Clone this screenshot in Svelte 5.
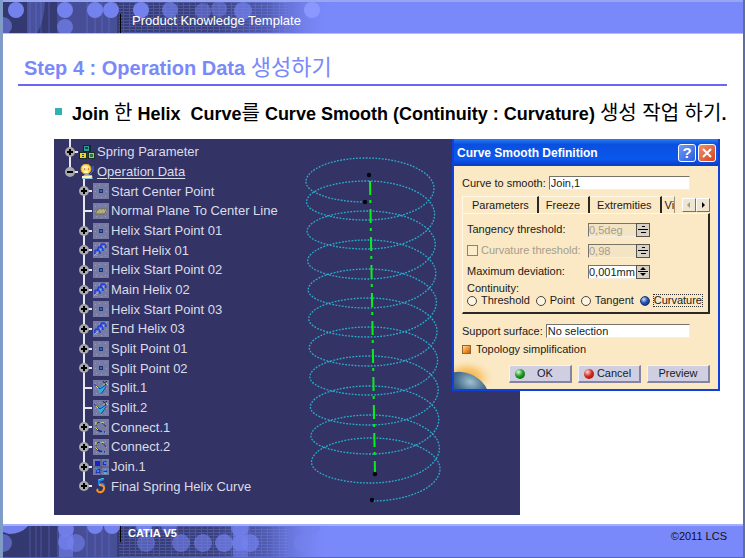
<script lang="ts">
  type Node = { label: string; icon: string; expandable: boolean };

  const roots: Node[] = [
    { label: 'Spring Parameter', icon: 'blocks', expandable: true },
    { label: 'Operation Data', icon: 'body', expandable: true }
  ];

  const children: Node[] = [
    { label: 'Start Center Point', icon: 'point', expandable: true },
    { label: 'Normal Plane To Center Line', icon: 'plane', expandable: false },
    { label: 'Helix Start Point 01', icon: 'point', expandable: true },
    { label: 'Start Helix 01', icon: 'helix', expandable: true },
    { label: 'Helix Start Point 02', icon: 'point', expandable: true },
    { label: 'Main Helix 02', icon: 'helix', expandable: true },
    { label: 'Helix Start Point 03', icon: 'point', expandable: true },
    { label: 'End Helix 03', icon: 'helix', expandable: true },
    { label: 'Split Point 01', icon: 'point', expandable: true },
    { label: 'Split Point 02', icon: 'point', expandable: true },
    { label: 'Split.1', icon: 'split', expandable: false },
    { label: 'Split.2', icon: 'split', expandable: false },
    { label: 'Connect.1', icon: 'connect', expandable: true },
    { label: 'Connect.2', icon: 'connect', expandable: true },
    { label: 'Join.1', icon: 'join', expandable: true },
    { label: 'Final Spring Helix Curve', icon: 'spring', expandable: true }
  ];

  // y of the highest and lowest point of every turn, top to bottom
  const tops = [19, 42, 72, 101, 130, 159, 188, 217, 247, 276, 299];
  const bottoms = [63, 81, 110, 140, 169, 198, 227, 256, 286, 315, 344, 362];
  const K = 0.55;

  function helixPath(): string {
    let d = `M75 ${bottoms[0]}`;
    tops.forEach((top, i) => {
      const low = bottoms[i];
      const next = bottoms[i + 1];
      const left = 16 + i * 0.55;
      const right = 144 + i * 0.6;
      const mid = 76 + i * 0.5;
      const endX = i === tops.length - 1 ? 82 : mid;
      const startX = i === 0 ? 75 : mid;
      const ly = low - (low - top) * 0.46;
      const ry = top + (next - top) * 0.49;
      d += ` C${startX - (startX - left) * K} ${low} ${left} ${ly + (low - ly) * K} ${left} ${ly}`;
      d += ` C${left} ${ly - (ly - top) * K} ${mid - (mid - left) * K} ${top} ${mid} ${top}`;
      d += ` C${mid + (right - mid) * K} ${top} ${right} ${ry - (ry - top) * K} ${right} ${ry}`;
      d += ` C${right} ${ry + (next - ry) * K} ${endX + (right - endX) * K} ${next} ${endX} ${next}`;
    });
    return d;
  }

  const tabs = ['Parameters', 'Freeze', 'Extremities'];
  const modes = ['Threshold', 'Point', 'Tangent', 'Curvature'];

  let activeTab = $state('Parameters');
  let continuity = $state('Curvature');
  let curve = $state('Join,1');
  let support = $state('No selection');
  let tangency = $state('0,5deg');
  let curvature = $state('0,98');
  let deviation = $state('0,001mm');
  let useCurvature = $state(false);
  let simplify = $state(true);
</script>

{#snippet pattern(id: string, flip: boolean)}
  <svg class="pattern" viewBox="0 0 340 31" width="340" height="31" aria-hidden="true">
    <defs>
      <linearGradient id="{id}-fade">
        <stop offset="0" stop-color="#33386f" />
        <stop offset="0.62" stop-color="#3a407c" />
        <stop offset="0.78" stop-color="#4a54a4" stop-opacity="0.85" />
        <stop offset="0.97" stop-color="#7a89fa" stop-opacity="0" />
      </linearGradient>
      <pattern id="{id}-grid" width="6" height="3" patternUnits="userSpaceOnUse">
        <path d="M0 0.5H6M0.5 0V3" stroke="#7a89fa" stroke-width="1" opacity="0.3" />
      </pattern>
    </defs>
    <rect width="340" height="31" fill="url(#{id}-fade)" />
    <rect x="54" width="60" height="31" fill="#6673d8" opacity="0.35" />
    <rect x="116" width="170" height="31" fill="url(#{id}-grid)" />
    <path d="M27 0V31M33 0V31M38 0V31M46 0V31M84 0V31M92 0V31M99 0V31M106 0V31" stroke="#7a89fa" opacity="0.35" />
    <g fill="#7482ee">
      {#if flip}
        <path d="M0 0H25Q18 8 6 8L0 6Z" />
        <circle cx="0" cy="17" r="9" opacity="0.6" />
        <path d="M56 0H70V31H56Z" opacity="0.6" />
        <circle cx="63" cy="3" r="8" opacity="0.8" /><circle cx="63" cy="16" r="8" opacity="0.7" />
        <circle cx="73" cy="17" r="9" opacity="0.6" />
        <circle cx="92" cy="0" r="8" /><circle cx="109" cy="0" r="8" />
        <circle cx="141" cy="0" r="8" /><circle cx="166" cy="0" r="8" opacity="0.6" />
        <circle cx="143" cy="17" r="9" opacity="0.5" /><circle cx="178" cy="17" r="9" opacity="0.6" />
        <circle cx="200" cy="17" r="9" opacity="0.6" /><circle cx="221" cy="17" r="9" opacity="0.7" />
        <path d="M230 0H245V31H230Z" opacity="0.6" />
        <circle cx="237" cy="2" r="9" opacity="0.7" /><circle cx="237" cy="17" r="8" opacity="0.7" />
        <circle cx="247" cy="17" r="9" opacity="0.7" />
        <circle cx="300" cy="17" r="9" opacity="0.6" /><circle cx="308" cy="0" r="9" opacity="0.7" />
      {:else}
        <path d="M24 0H42Q41 20 34 31H24Z" opacity="0.35" />
        <circle cx="13" cy="8" r="8" /><circle cx="0" cy="24" r="9" opacity="0.6" />
        <circle cx="62" cy="8" r="8" /><circle cx="62" cy="25" r="8" opacity="0.7" />
        <circle cx="92" cy="8" r="8" /><circle cx="108" cy="8" r="8" />
        <circle cx="138" cy="8" r="8" /><circle cx="167" cy="8" r="8" opacity="0.7" />
        <circle cx="200" cy="9" r="8" opacity="0.5" /><circle cx="216" cy="7" r="8" opacity="0.5" />
        <circle cx="240" cy="9" r="9" opacity="0.7" /><circle cx="309" cy="8" r="8" fill="#8b98ff" />
      {/if}
    </g>
  </svg>
{/snippet}

{#snippet icon(name: string)}
  <svg class="icon" viewBox="0 0 16 16" width="16" height="16" aria-hidden="true">
    {#if name === 'blocks'}
      <path d="M4 1h8v7H4z" fill="#12262c" />
      <path d="M5 2h5v5H5z" fill="#2f9a9c" />
      <path d="M6 3h3v2H6z" fill="#15444c" />
      <path d="M0 8h8v7H0z" fill="#1c2a20" />
      <path d="M1 9h6v5H1z" fill="#f0d820" />
      <path d="M3 10h2v1H3zM3 12h2v1H3z" fill="#33402a" />
      <path d="M9 8h7v7H9z" fill="#1a3026" />
      <path d="M10 9h5v5h-5z" fill="#cdbb58" />
      <path d="M11 10h3v3h-3z" fill="#2f7040" />
    {:else if name === 'body'}
      <path d="M3 15q1-5 5-5t6 5z" fill="#8fc0e8" />
      <circle cx="7" cy="5" r="5" fill="#ffd86a" stroke="#e5a022" />
      <path d="M4 4q2-2 5 0M5 7q2 2 4 0" fill="none" stroke="#fff7c2" stroke-width="2" />
      <path d="M5 5h1M9 5h1" stroke="#7a5010" />
      <path d="M3 13h8l2-1" stroke="#fff4b0" stroke-width="2" fill="none" />
      <path d="M14 2v5l-3 3" stroke="#3d78ee" fill="none" />
    {:else if name === 'spring'}
      <path d="M11 1L6 3v3q5-1 5 2" fill="none" stroke="#1f7df5" stroke-width="2" />
      <path d="M6 7q6 0 5 4q-1 4-5 3q-3-1-1-3" fill="none" stroke="#ff9418" stroke-width="2" />
      <path d="M5 2l6-2" stroke="#35d0ff" />
    {:else}
      <rect width="16" height="16" fill="#777aa2" />
      <path d="M2 3.5h1M12 2.5h1M13 8.5h1M3 13.5h1M8 14.5h1M6 2.5h1M2 8.5h1M12 13.5h1" stroke="#9a9cba" />
      {#if name === 'point'}
        <path d="M6 6h4v4H6z" fill="#1b2f78" />
        <path d="M7 7h2v2H7z" fill="#2f74ac" />
      {:else if name === 'plane'}
        <path d="M2 11l3-5h9l-3 5z" fill="#a39d72" stroke="#71714e" />
        <path d="M4 9h8M6 7h7" stroke="#d4c77c" stroke-dasharray="2 1" />
      {:else if name === 'helix'}
        <path d="M1 14L14 1" stroke="#8fb4ee" />
        <path d="M2 12q-1-4 2-4t3 4M5 9q-1-4 2-4t3 4M8 6q-1-4 2-4t3 4" fill="none" stroke="#1c3ae0" stroke-width="1.5" />
        <path d="M4 11l1 1M7 8l1 1M10 5l1 1" stroke="#42c4e8" />
      {:else if name === 'split'}
        <path d="M2 5l4 3 4-3 3 2-5 7z" fill="#2fb4d2" />
        <path d="M1 4l6 5 6-4M8 14l5-7" stroke="#2238b4" fill="none" />
        <path d="M10 1l3 4M14 1l-4 3" stroke="#20243c" />
        <path d="M13 3l2 2M3 6l2 2M10 4h2" stroke="#d8d478" />
      {:else if name === 'connect'}
        <path d="M3 7Q3 3 7 3q4 1 6 5" fill="none" stroke="#283070" />
        <path d="M3 9q3 4 9 4" fill="none" stroke="#1c2a90" stroke-width="1.5" />
        <path d="M3 3v3M3 9l2 2M9 3l2 1" stroke="#e5e05b" />
        <path d="M7 3l2 1M9 13h2" stroke="#72e1e5" />
      {:else}
        <path d="M2 2h5v5H2z" fill="#1224cc" />
        <path d="M10 3l3 3M13 2l-3 4M3 10l4 4M7 10l-4 4M10 11l4 2" stroke="#1830c6" stroke-width="2" />
        <path d="M10 11h3M11 14h3M4 12h2M11 4h2M3 10h1" stroke="#52dfff" />
        <path d="M8 0v16M0 8h16" stroke="#4a5078" />
      {/if}
    {/if}
  </svg>
{/snippet}

{#snippet treeRow(node: Node, open: boolean)}
  {#if node.expandable}
    <button class="toggle" type="button" aria-label={`${open ? 'Collapse' : 'Expand'} ${node.label}`}>
      <svg viewBox="0 0 12 12" width="12" height="12">
        <circle cx="6" cy="6" r="5" fill="#a8a8ac" />
        <path d={open ? 'M3 6h6' : 'M3 6h6M6 3v6'} stroke="#000" stroke-width="2" />
      </svg>
    </button>
  {:else}
    <span class="toggle"></span>
  {/if}
  {@render icon(node.icon)}
  <span class="node-label">{node.label}</span>
{/snippet}

{#snippet spinner(name: string, off: boolean)}
  <span class="spinner">
    <button type="button" disabled={off} aria-label={`Increase ${name}`}>
      <svg viewBox="0 0 12 6" width="12" height="6">
        <path d={off ? 'M5 2h3v1H5zM1 5h10v1H1z' : 'M3 4l3-3 3 3zM1 5h10v1H1z'} fill="#000" />
      </svg>
    </button>
    <button type="button" disabled={off} aria-label={`Decrease ${name}`}>
      <svg viewBox="0 0 12 6" width="12" height="6">
        <path d={off ? 'M4 2h5v1H4z' : 'M3 1l3 3 3-3z'} fill="#000" />
      </svg>
    </button>
  </span>
{/snippet}

<div class="slide">
  <header class="banner">
    {@render pattern('head', false)}
    <span class="banner-title">Product Knowledge Template</span>
  </header>

  <main>
    <h1>Step 4 : Operation Data <span class="ko">생성하기</span></h1>
    <p class="bullet">
      Join <span class="ko">한</span> Helix&nbsp; Curve<span class="ko">를</span> Curve Smooth (Continuity : Curvature)
      <span class="ko">생성 작업 하기</span>.
    </p>

    <div class="figure">
      <section class="stage">
        <ul class="tree">
          {#each roots as node, i}
            <li class="root" class:end={i === roots.length - 1}>
              {@render treeRow(node, i === 1)}
            </li>
          {/each}
          {#each children as node, i}
            <li class="child" class:end={i === children.length - 1}>
              {@render treeRow(node, false)}
            </li>
          {/each}
        </ul>
        <svg class="helix" viewBox="0 0 160 376" width="160" height="376" role="img" aria-label="Spring helix">
          <path d={helixPath()} fill="none" stroke="#2aaecb" stroke-width="1.3" stroke-dasharray="1.8 1.4" />
          <path d="M80 42L85 335" stroke="#08f01c" stroke-width="2" stroke-dasharray="14 5 3 6" />
          <g fill="#05050c">
            <circle cx="79" cy="36" r="2.2" />
            <circle cx="75" cy="63" r="2.2" />
            <circle cx="85" cy="335" r="2.2" />
            <circle cx="82" cy="361" r="2.2" />
          </g>
        </svg>
      </section>

      <form class="dialog" onsubmit={(e) => e.preventDefault()}>
        <div class="titlebar">
          <h2>Curve Smooth Definition</h2>
          <button class="help" type="button" aria-label="Help">?</button>
          <button class="close" type="button" aria-label="Close">
            <svg viewBox="0 0 14 14" width="14" height="14"><path d="M3 3l8 8M11 3L3 11" stroke="#fff" stroke-width="2" /></svg>
          </button>
        </div>

        <div class="content">
          <div class="line">
            <label for="curve">Curve to smooth:</label>
            <input id="curve" class="text" type="text" bind:value={curve} />
          </div>

          <div class="tabs">
            {#each tabs as tab}
              <button class="tab" class:active={tab === activeTab} type="button" onclick={() => (activeTab = tab)}>{tab}</button>
            {/each}
            <button class="tab cut" type="button">Vi</button>
            <span class="scroll">
              <button type="button" disabled aria-label="Previous tabs"><svg viewBox="0 0 8 8" width="8" height="8"><path d="M5 1L2 4l3 3z" fill="#a09c94" /></svg></button>
              <button type="button" aria-label="Next tabs"><svg viewBox="0 0 8 8" width="8" height="8"><path d="M3 1l3 3-3 3z" fill="#000" /></svg></button>
            </span>
          </div>

          <div class="panel">
            <div class="param">
              <label for="tangency">Tangency threshold:</label>
              <input id="tangency" class="value" type="text" disabled bind:value={tangency} />
              {@render spinner('tangency', true)}
            </div>
            <div class="param off">
              <span class="with-check">
                <input id="use-curvature" class="check" type="checkbox" disabled bind:checked={useCurvature} aria-label="Use curvature threshold" />
                <label for="curvature">Curvature threshold:</label>
              </span>
              <input id="curvature" class="value" type="text" disabled bind:value={curvature} />
              {@render spinner('curvature', true)}
            </div>
            <div class="param">
              <label for="deviation">Maximum deviation:</label>
              <input id="deviation" class="value" type="text" bind:value={deviation} />
              {@render spinner('deviation', false)}
            </div>
            <fieldset>
              <legend>Continuity:</legend>
              <div class="modes">
                {#each modes as mode}
                  <label>
                    <input type="radio" name="continuity" value={mode} bind:group={continuity} />
                    <span class:focused={mode === continuity}>{mode}</span>
                  </label>
                {/each}
              </div>
            </fieldset>
          </div>

          <div class="line support">
            <label for="support">Support surface:</label>
            <input id="support" class="text" type="text" bind:value={support} />
          </div>
          <label class="simplify">
            <input class="orange" type="checkbox" bind:checked={simplify} />
            Topology simplification
          </label>

          <div class="actions">
            <button type="submit"><i class="ball green"></i><span>OK</span></button>
            <button type="button"><i class="ball red"></i><span>Cancel</span></button>
            <button type="button"><span>Preview</span></button>
          </div>
        </div>

        <svg class="planet" viewBox="0 0 42 28" width="42" height="28" aria-hidden="true">
          <defs>
            <radialGradient id="glow" cx="0.3" cy="0.6" r="0.68">
              <stop offset="0" stop-color="#f0a030" />
              <stop offset="0.5" stop-color="#f9c368" stop-opacity="0.8" />
              <stop offset="1" stop-color="#fbe9c5" stop-opacity="0" />
            </radialGradient>
            <radialGradient id="globe" cx="0.55" cy="0.2" r="0.8">
              <stop offset="0" stop-color="#9fc0cf" />
              <stop offset="0.35" stop-color="#4c7392" />
              <stop offset="0.8" stop-color="#152842" />
            </radialGradient>
          </defs>
          <rect width="42" height="28" fill="url(#glow)" />
          <ellipse cx="10" cy="30" rx="25" ry="18" fill="url(#globe)" transform="rotate(22 10 30)" />
        </svg>
      </form>
    </div>
  </main>

  <footer class="banner foot">
    {@render pattern('foot', true)}
    <strong>CATIA V5</strong>
    <small>©2011 LCS</small>
  </footer>
</div>

<style>
  :global(body) {
    margin: 0;
    background: #fff;
  }

  .slide {
    box-sizing: border-box;
    display: flex;
    flex-direction: column;
    min-height: 100vh;
    border-left: 3px solid #7f9bc8;
    border-right: 2px solid #5c6f9e;
    background: #fff;
    font-family: 'Liberation Sans', 'Noto Sans CJK KR', sans-serif;
  }

  .ko {
    font-weight: 400;
    line-height: 1;
  }

  .banner {
    position: relative;
    display: flex;
    align-items: flex-start;
    box-sizing: border-box;
    height: 34px;
    border-top: 2px solid #98a5f0;
    border-bottom: 1px solid #b3bdfc;
    background: #7a89fa;
  }

  .pattern {
    position: absolute;
    left: 0;
    top: 0;
  }

  .banner::before {
    content: '';
    position: relative;
    z-index: 1;
    width: 1px;
    height: 19px;
    margin: 12px 0 0 117px;
    background: #000;
  }

  .banner-title {
    position: relative;
    margin: 11px 0 0 11px;
    color: #fff;
    font-size: 13px;
    line-height: 16px;
  }

  .foot {
    border-top: 2px solid #a3aefc;
    border-bottom: 1px solid #5566c4;
  }

  .foot::before {
    height: 16px;
    margin-top: 0;
  }

  .foot strong {
    position: relative;
    margin: 1px 0 0 7px;
    color: #fff;
    font-size: 11px;
    line-height: 12px;
  }

  .foot small {
    margin: 4px 16px 0 auto;
    color: #111;
    font-size: 11px;
    line-height: 12px;
  }

  main {
    flex: 1;
    padding: 20px 16px 9px 15px;
  }

  h1 {
    margin: 0;
    padding: 0 0 2px 6px;
    border-bottom: 2px solid #6c66f2;
    color: #7a89fa;
    font-size: 20px;
    line-height: 28px;
  }

  h1 .ko {
    font-size: 22px;
  }

  .bullet {
    display: flow-root;
    position: relative;
    margin: 16px -16px 13px 54px;
    color: #000;
    font-size: 18px;
    font-weight: 700;
    line-height: 24px;
    white-space: nowrap;
  }

  .bullet .ko {
    font-size: 20px;
  }

  .bullet::before {
    content: '';
    position: absolute;
    left: -17px;
    top: 6px;
    width: 7px;
    height: 7px;
    background: #2eb2b2;
  }

  .figure {
    position: relative;
    margin: 0 7px 0 36px;
  }

  .stage {
    display: flex;
    width: 70%;
    min-width: 440px;
    height: 376px;
    background: #333366;
  }

  .tree {
    display: flex;
    flex-direction: column;
    box-sizing: border-box;
    width: 236px;
    margin: 0;
    padding: 3px 0 19px;
    list-style: none;
    color: #dcdce8;
    font-size: 13px;
  }

  .tree li {
    position: relative;
    display: flex;
    flex: 1;
    align-items: center;
    padding-left: 10px;
    white-space: nowrap;
  }

  .tree .child {
    padding-left: 24px;
  }

  .tree li::before {
    content: '';
    position: absolute;
    left: 15px;
    top: -3px;
    bottom: 0;
    width: 2px;
    background: #e6e6ee;
  }

  .tree li::after {
    content: '';
    position: absolute;
    left: 16px;
    top: 9px;
    width: 8px;
    height: 2px;
    background: #e6e6ee;
  }

  .tree .child::before {
    left: 29px;
  }

  .tree .child::after {
    left: 30px;
  }

  .tree .end::before {
    bottom: 50%;
  }

  .toggle {
    position: relative;
    z-index: 1;
    width: 12px;
    height: 12px;
    margin-right: 3px;
    padding: 0;
    border: 0;
    background: none;
  }

  .toggle svg,
  .icon,
  .helix,
  .planet {
    display: block;
  }

  .icon {
    position: relative;
    z-index: 1;
    margin-right: 2px;
  }

  .root.end .node-label {
    text-decoration: underline;
    text-underline-offset: 2px;
  }

  .dialog {
    position: absolute;
    top: 0;
    right: 0;
    box-sizing: border-box;
    width: 268px;
    height: 252px;
    border: 2px solid #1040dc;
    border-top: 0;
    background: #fbe9c5;
    color: #1a1a1a;
    font-size: 11px;
    line-height: 13px;
  }

  .dialog button,
  .dialog input {
    font-family: inherit;
    font-size: 11px;
    color: inherit;
  }

  .titlebar {
    display: flex;
    align-items: center;
    gap: 2px;
    height: 27px;
    padding: 0 2px 0 3px;
    background: linear-gradient(#2c7cf4, #0a50e0 20%, #0a58ee 75%, #0a3cc0);
  }

  h2 {
    flex: 1;
    margin: 0;
    color: #fff;
    font-size: 12px;
    line-height: 16px;
  }

  .dialog .titlebar button {
    display: flex;
    align-items: center;
    justify-content: center;
    width: 18px;
    height: 18px;
    padding: 0;
    border: 1px solid #fff;
    border-radius: 3px;
    color: #fff;
    font-size: 15px;
    font-weight: 700;
  }

  .help {
    background: linear-gradient(135deg, #6f9cf8, #2a5ade);
  }

  .close {
    background: linear-gradient(135deg, #f09070, #d8431c);
  }

  .content {
    padding: 10px 8px 0 8px;
  }

  .line {
    display: flex;
    align-items: center;
    gap: 3px;
    padding-right: 20px;
  }

  .text {
    flex: 1;
    min-width: 0;
    height: 14px;
    box-sizing: border-box;
    padding: 0 1px;
    border: 1px solid #f4efe2;
    border-top-color: #77736a;
    border-left-color: #77736a;
    background: #fff;
  }

  .tabs {
    display: flex;
    height: 17px;
    margin-top: 6px;
  }

  .tab {
    padding: 0 8px 0 7px;
    border: 0;
    border-top: 1px solid #fff8e6;
    border-right: 2px solid #2a2824;
    background: none;
    line-height: 14px;
  }

  .tab.active {
    padding: 0 8px 0 9px;
    border-left: 1px solid #fff8e6;
  }

  .tab.cut {
    padding: 0 0 0 3px;
    border-right: 1px solid #9a9282;
    overflow: hidden;
  }

  .scroll {
    display: flex;
    margin: 2px 0 1px auto;
  }

  .scroll button {
    display: flex;
    align-items: center;
    justify-content: center;
    width: 14px;
    padding: 0;
    border: 1px solid #fff;
    border-right-color: #77736a;
    border-bottom-color: #77736a;
    background: #efe6d2;
  }

  .panel {
    box-sizing: border-box;
    height: 101px;
    padding: 5px 5px 0 4px;
    border: 1px solid #fff8e6;
    border-right: 2px solid #2a2824;
    border-bottom: 2px solid #2a2824;
  }

  .param {
    display: grid;
    grid-template-columns: 121px 48px 14px;
    align-items: center;
    height: 21px;
  }

  .off,
  .dialog .value:disabled {
    color: #a59d8c;
  }

  .with-check {
    display: flex;
    align-items: center;
    gap: 3px;
  }

  .check {
    appearance: none;
    box-sizing: border-box;
    width: 11px;
    height: 11px;
    margin: 0;
    border: 1px solid #8a8272;
    background: #fdeccb;
  }

  .value {
    box-sizing: border-box;
    width: 48px;
    height: 14px;
    padding: 0;
    border: 1px solid #f4efe2;
    border-top-color: #77736a;
    border-left-color: #77736a;
    border-right: 0;
    background: #fff;
  }

  .value:disabled {
    background: #f3e4c4;
  }

  .spinner {
    display: grid;
    border: 1px solid #55524c;
    background: #d8d2c6;
  }

  .spinner button {
    height: 6px;
    padding: 0;
    border: 0;
    background: none;
  }

  .spinner svg {
    display: block;
  }

  fieldset {
    margin: 0;
    padding: 0;
    border: 0;
  }

  legend {
    padding: 0;
    line-height: 12px;
  }

  .modes {
    display: flex;
    justify-content: space-between;
  }

  .modes label {
    display: flex;
    align-items: center;
    gap: 3px;
  }

  .modes span {
    border: 1px solid transparent;
    line-height: 11px;
  }

  .modes .focused {
    border: 1px dotted #333;
  }

  .modes input {
    appearance: none;
    box-sizing: border-box;
    width: 10px;
    height: 10px;
    margin: 0;
    border: 1px solid #4a4640;
    border-radius: 50%;
    background: #fdf5e2;
  }

  .modes input:checked {
    border-color: #1c3a78;
    background: radial-gradient(circle at 35% 30%, #d4e4ff, #2858b4 45%, #0c2460);
  }

  .support {
    margin-top: 10px;
  }

  .simplify {
    display: flex;
    align-items: center;
    gap: 5px;
    margin-top: 5px;
  }

  .orange {
    appearance: none;
    box-sizing: border-box;
    width: 9px;
    height: 9px;
    margin: 0;
    border: 1px solid #9a6428;
    background: #fff;
  }

  .orange:checked {
    background: linear-gradient(135deg, #ffd79c, #ee8c24 60%, #b55c10);
  }

  .actions {
    position: relative;
    z-index: 1;
    display: flex;
    justify-content: flex-end;
    gap: 6px;
    margin-top: 9px;
  }

  .actions button {
    display: flex;
    align-items: center;
    justify-content: center;
    box-sizing: border-box;
    width: 63px;
    height: 18px;
    padding: 0 5px;
    border: 1px solid #f4f2fa;
    border-right: 2px solid #8683a0;
    border-bottom: 2px solid #8683a0;
    background: #d0cfe2;
    line-height: 13px;
  }

  .actions button span {
    flex: 1;
    text-align: center;
  }

  .ball {
    width: 10px;
    height: 10px;
    border-radius: 50%;
  }

  .green {
    background: radial-gradient(circle at 35% 30%, #d4ffd0, #1f9a28 45%, #0a4c12);
  }

  .red {
    background: radial-gradient(circle at 35% 30%, #ffdcd4, #d82c20 45%, #701008);
  }

  .planet {
    position: absolute;
    left: 0;
    bottom: 0;
  }
</style>
